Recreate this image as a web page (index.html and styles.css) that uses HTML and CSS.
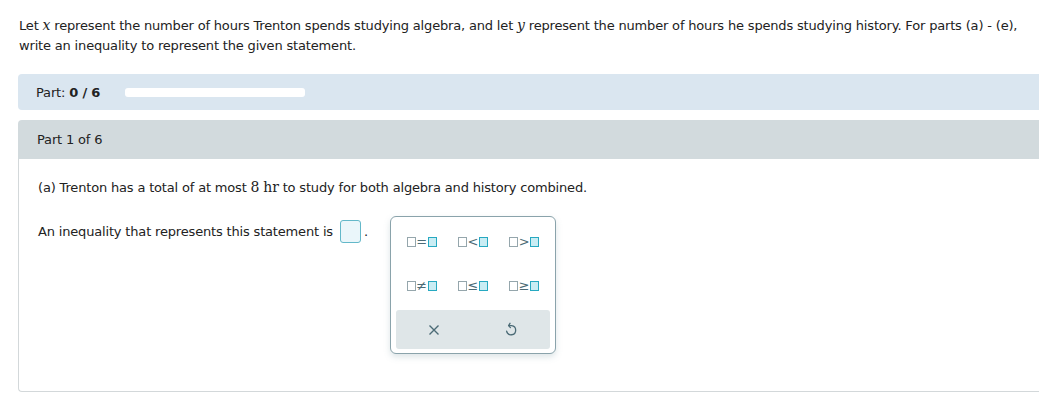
FILE: index.html
```html
<!DOCTYPE html>
<html>
<head>
<meta charset="utf-8">
<link rel="stylesheet" href="styles.css">
</head>
<body>
<p class="intro">Let <span class="mi">x</span> represent the number of hours Trenton spends studying algebra, and let <span class="mi">y</span> represent the number of hours he spends studying history. For parts (a) - (e), write an inequality to represent the given statement.</p>

<div class="partbar">
  <span class="partlabel">Part: <b>0 / 6</b></span>
  <span class="progress"></span>
</div>

<div class="parthead">Part 1 of 6</div>

<div class="partbody">
  <p class="question">(a) Trenton has a total of at most <span class="mn">8</span> <span class="mn">hr</span> to study for both algebra and history combined.</p>
  <div class="answerrow">
    <div class="answertext">An inequality that represents this statement is <span class="ansbox"></span><span class="dot">.</span></div>
    <div class="palette">
      <div class="grid">
        <div class="key"><span class="sq"></span><span class="op">=</span><span class="sq t"></span></div>
        <div class="key"><span class="sq"></span><span class="op">&lt;</span><span class="sq t"></span></div>
        <div class="key"><span class="sq"></span><span class="op">&gt;</span><span class="sq t"></span></div>
        <div class="key"><span class="sq"></span><span class="op">≠</span><span class="sq t"></span></div>
        <div class="key"><span class="sq"></span><span class="op">≤</span><span class="sq t"></span></div>
        <div class="key"><span class="sq"></span><span class="op">≥</span><span class="sq t"></span></div>
      </div>
      <div class="actions">
        <span class="act"><svg width="12" height="12" viewBox="0 0 12 12"><path d="M1.5 1.5 L10.5 10.5 M10.5 1.5 L1.5 10.5" stroke="#4b6b76" stroke-width="1.4" fill="none"/></svg></span>
        <span class="act"><svg width="14" height="16" viewBox="0 0 14 16"><path d="M4.8 3.6 L7.6 3.6 A4.6 4.6 0 1 1 2.6 9.2" stroke="#4b6b76" stroke-width="1.3" fill="none" stroke-linecap="round"/><path d="M6 1.3 L4.6 3.6 L6.4 5.6" stroke="#4b6b76" stroke-width="1.3" fill="none" stroke-linejoin="round" stroke-linecap="round"/></svg></span>
      </div>
    </div>
  </div>
</div>
</body>
</html>
```

FILE: styles.css
```css
html, body {
  margin: 0;
  padding: 0;
  background: #fff;
}
body {
  font-family: "DejaVu Sans", Verdana, sans-serif;
  font-size: 13px;
  letter-spacing: -0.17px;
  color: #222;
  width: 1039px;
  overflow: hidden;
}
.intro {
  margin: 0;
  padding: 16px 0 0 19px;
  line-height: 20px;
  width: 1018px;
}
.mi {
  font-family: "DejaVu Serif", "Liberation Serif", serif;
  font-style: italic;
  font-size: 14px;
  line-height: 14px;
}
.mn {
  font-family: "DejaVu Serif", "Liberation Serif", serif;
  font-size: 14px;
  line-height: 14px;
}
.partbar {
  margin: 18px 0 0 18px;
  height: 36px;
  background: #dae6f0;
  border-radius: 4px 0 0 4px;
  display: flex;
  align-items: center;
  padding-left: 18px;
}
.partlabel b {
  font-weight: bold;
}
.progress {
  display: inline-block;
  margin-left: 25px;
  width: 180px;
  height: 9px;
  background: #fff;
  border-radius: 3px;
}
.parthead {
  margin: 10px 0 0 18px;
  height: 39px;
  background: #d2dadd;
  border-radius: 4px 0 0 0;
  display: flex;
  align-items: center;
  padding-left: 19px;
}
.partbody {
  margin-left: 18px;
  height: 232px;
  border-left: 1px solid #d3d8da;
  border-bottom: 1px solid #d3d8da;
  border-radius: 0 0 0 4px;
  padding: 0 0 0 19px;
}
.question {
  margin: 0;
  padding-top: 20px;
  line-height: 18px;
}
.answerrow {
  display: flex;
  align-items: flex-start;
  margin-top: 19px;
}
.answertext {
  display: flex;
  align-items: center;
  margin-top: 3px;
  height: 24px;
}
.ansbox {
  display: inline-block;
  width: 19px;
  height: 21px;
  margin-left: 7px;
  border: 1.5px solid #63b8c9;
  border-radius: 3px;
  background: #eaf6fa;
}
.dot {
  margin-left: 3px;
}
.palette {
  margin-left: 22px;
  width: 166px;
  height: 138px;
  border: 1px solid #8aa3ab;
  border-radius: 6px;
  box-shadow: 0 3px 6px rgba(120, 150, 160, 0.25);
  box-sizing: border-box;
  display: flex;
  flex-direction: column;
  padding: 0 5px 4px 5px;
  background: #fff;
}
.grid {
  display: grid;
  grid-template-columns: repeat(3, 1fr);
  grid-template-rows: 44px 44px;
  padding-top: 3px;
}
.key {
  display: flex;
  align-items: center;
  justify-content: center;
  color: #4b6b76;
  font-size: 13px;
  letter-spacing: 0;
}
.sq {
  display: inline-block;
  width: 7px;
  height: 8px;
  border: 1.5px solid #95a6ac;
}
.sq.t {
  border-color: #27a9c1;
  background: #c9edf4;
}
.op {
  display: inline-block;
  width: 12px;
  text-align: center;
  line-height: 10px;
  font-family: "DejaVu Sans", sans-serif;
  font-size: 13px;
}
.actions {
  flex: 1;
  background: #dfe6e8;
  border-radius: 3px;
  display: grid;
  grid-template-columns: 1fr 1fr;
  align-items: center;
  justify-items: center;
  margin-top: 2px;
}
.act {
  display: flex;
  align-items: center;
  justify-content: center;
}
```
